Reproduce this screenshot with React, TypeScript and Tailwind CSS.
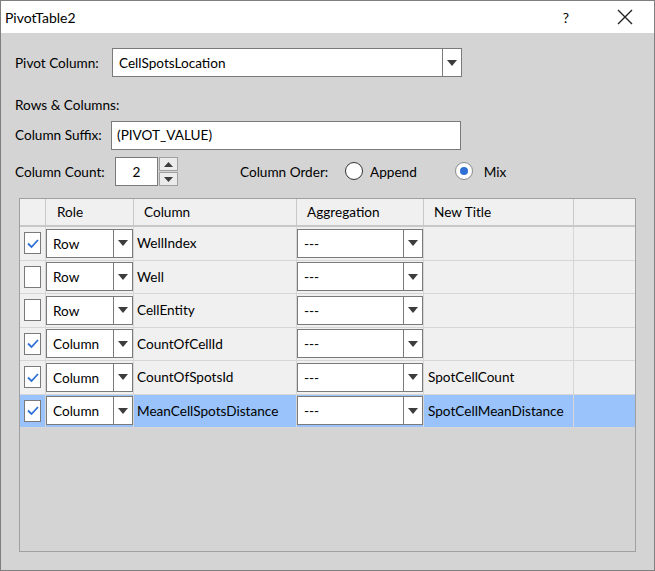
import React from 'react';

type Row = {
  checked: boolean;
  role: string;
  column: string;
  agg: string;
  title: string;
  selected?: boolean;
};

const rows: Row[] = [
  { checked: true, role: 'Row', column: 'WellIndex', agg: '---', title: '' },
  { checked: false, role: 'Row', column: 'Well', agg: '---', title: '' },
  { checked: false, role: 'Row', column: 'CellEntity', agg: '---', title: '' },
  { checked: true, role: 'Column', column: 'CountOfCellId', agg: '---', title: '' },
  { checked: true, role: 'Column', column: 'CountOfSpotsId', agg: '---', title: 'SpotCellCount' },
  { checked: true, role: 'Column', column: 'MeanCellSpotsDistance', agg: '---', title: 'SpotCellMeanDistance', selected: true },
];

const Arrow = () => (
  <svg width="10" height="6" viewBox="0 0 10 6">
    <path d="M0 0 H10 L5 6 Z" fill="#3c3c3c" />
  </svg>
);

const Combo = ({ value, width, btn = 19 }: { value: string; width: string; btn?: number }) => (
  <div className={`${width} h-[29px] flex bg-white border border-[#7a7a7a]`}>
    <div className="flex-1 flex items-center pl-[6px] pt-[1px] truncate">{value}</div>
    <div
      className="flex items-center justify-center border-l border-[#7a7a7a]"
      style={{ width: btn }}
    >
      <Arrow />
    </div>
  </div>
);

const Check = ({ checked }: { checked: boolean }) => (
  <div className="w-[17px] h-[22px] bg-white border border-[#7a7a7a] flex items-center justify-center">
    {checked && (
      <svg width="12" height="9" viewBox="0 0 12 9">
        <path d="M1 4.5 L4.5 8 L11 1" stroke="#2f6fd6" strokeWidth="1.8" fill="none" />
      </svg>
    )}
  </div>
);

const Radio = ({ checked }: { checked: boolean }) => (
  <div
    className={`w-[18px] h-[18px] rounded-full bg-white border flex items-center justify-center ${
      checked ? 'border-[#8a8a8a]' : 'border-[#333333]'
    }`}
  >
    {checked && <div className="w-[8px] h-[8px] rounded-full bg-[#2f6fd6]" />}
  </div>
);

const cols = 'grid grid-cols-[26px_88px_163px_127px_150px_61px]';

export default function App() {
  return (
    <div
      className="w-[655px] h-[571px] border border-[#7f7f7f] bg-[#d4d4d4] flex flex-col text-[13.6px] text-black"
      style={{ fontFamily: 'Lato, "Noto Sans", sans-serif' }}
    >
      {/* title bar */}
      <div className="h-[32px] bg-white flex items-center shrink-0">
        <div className="pl-[4px] flex-1 text-[14px]">PivotTable2</div>
        <div className="w-[20px] text-[14px] mr-[41px] text-center">?</div>
        <svg width="16" height="16" viewBox="0 0 16 16" className="mr-[21px]">
          <path d="M1 1 L15 15 M15 1 L1 15" stroke="#222" strokeWidth="1.4" />
        </svg>
      </div>

      <div className="flex flex-col pl-[14px]">
        <div className="mt-[15px] flex items-center h-[29px]">
          <div className="w-[97px] pt-[1px]">Pivot Column:</div>
          <Combo value="CellSpotsLocation" width="w-[350px]" />
        </div>

        <div className="mt-[19px] h-[17px] flex items-center pt-[1px]">Rows &amp; Columns:</div>

        <div className="mt-[7px] flex items-center h-[29px] pt-[1px]">
          <div className="w-[96px]">Column Suffix:</div>
          <div className="w-[350px] h-[29px] bg-white border border-[#7a7a7a] flex items-center pl-[5px]">
            (PIVOT_VALUE)
          </div>
        </div>

        <div className="mt-[8px] flex items-center h-[29px]">
          <div className="w-[100px] pt-[1px]">Column Count:</div>
          <div className="w-[43px] h-[29px] bg-white border border-[#7a7a7a] flex items-center justify-center pt-[1px]">
            2
          </div>
          <div className="ml-[1px] w-[19px] h-[29px] flex flex-col gap-[1px]">
            <div className="flex-1 border border-[#a0a0a0] bg-[#ebebeb] flex items-center justify-center">
              <svg width="9" height="5" viewBox="0 0 9 5">
                <path d="M0 5 H9 L4.5 0 Z" fill="#3c3c3c" />
              </svg>
            </div>
            <div className="flex-1 border border-[#a0a0a0] bg-[#ebebeb] flex items-center justify-center">
              <svg width="9" height="5" viewBox="0 0 9 5">
                <path d="M0 0 H9 L4.5 5 Z" fill="#3c3c3c" />
              </svg>
            </div>
          </div>
          <div className="ml-[62px] w-[105px] pt-[1px]">Column Order:</div>
          <div className="flex items-center gap-[7px]">
            <Radio checked={false} />
            <span className="pt-[1px]">Append</span>
          </div>
          <div className="ml-[38px] flex items-center gap-[11px]">
            <Radio checked />
            <span className="pt-[1px]">Mix</span>
          </div>
        </div>

        {/* table */}
        <div className="mt-[12px] ml-[4px] w-[617px] h-[354px] border border-[#a0a0a0]">
          <div className={`${cols} h-[28px] bg-[#f0f0f0] border-b-2 border-[#c8c8c8]`}>
            <div className="border-r border-[#c8c8c8]" />
            <div className="border-r border-[#c8c8c8] flex items-center pl-[11px]">Role</div>
            <div className="border-r border-[#c8c8c8] flex items-center pl-[10px]">Column</div>
            <div className="border-r border-[#c8c8c8] flex items-center pl-[10px]">Aggregation</div>
            <div className="border-r border-[#c8c8c8] flex items-center pl-[10px]">New Title</div>
            <div />
          </div>
          {rows.map((r, i) => {
            const bg = r.selected ? 'bg-[#99c3fa]' : 'bg-[#f0f0f0]';
            return (
              <div
                key={i}
                className={`${cols} h-[33.5px] border-b border-[#d6d6d6] ${bg}`}
              >
                <div className="border-r border-[#d6d6d6] flex items-center pl-[4px]">
                  <Check checked={r.checked} />
                </div>
                <div className="border-r border-[#d6d6d6] flex items-center">
                  <Combo value={r.role} width="w-[87px]" btn={19} />
                </div>
                <div className="border-r border-[#d6d6d6] flex items-center pl-[3px]">{r.column}</div>
                <div className="border-r border-[#d6d6d6] flex items-center">
                  <Combo value={r.agg} width="w-[126px]" btn={19} />
                </div>
                <div className="border-r border-[#d6d6d6] flex items-center pl-[4px]">{r.title}</div>
                <div />
              </div>
            );
          })}
        </div>
      </div>
    </div>
  );
}
